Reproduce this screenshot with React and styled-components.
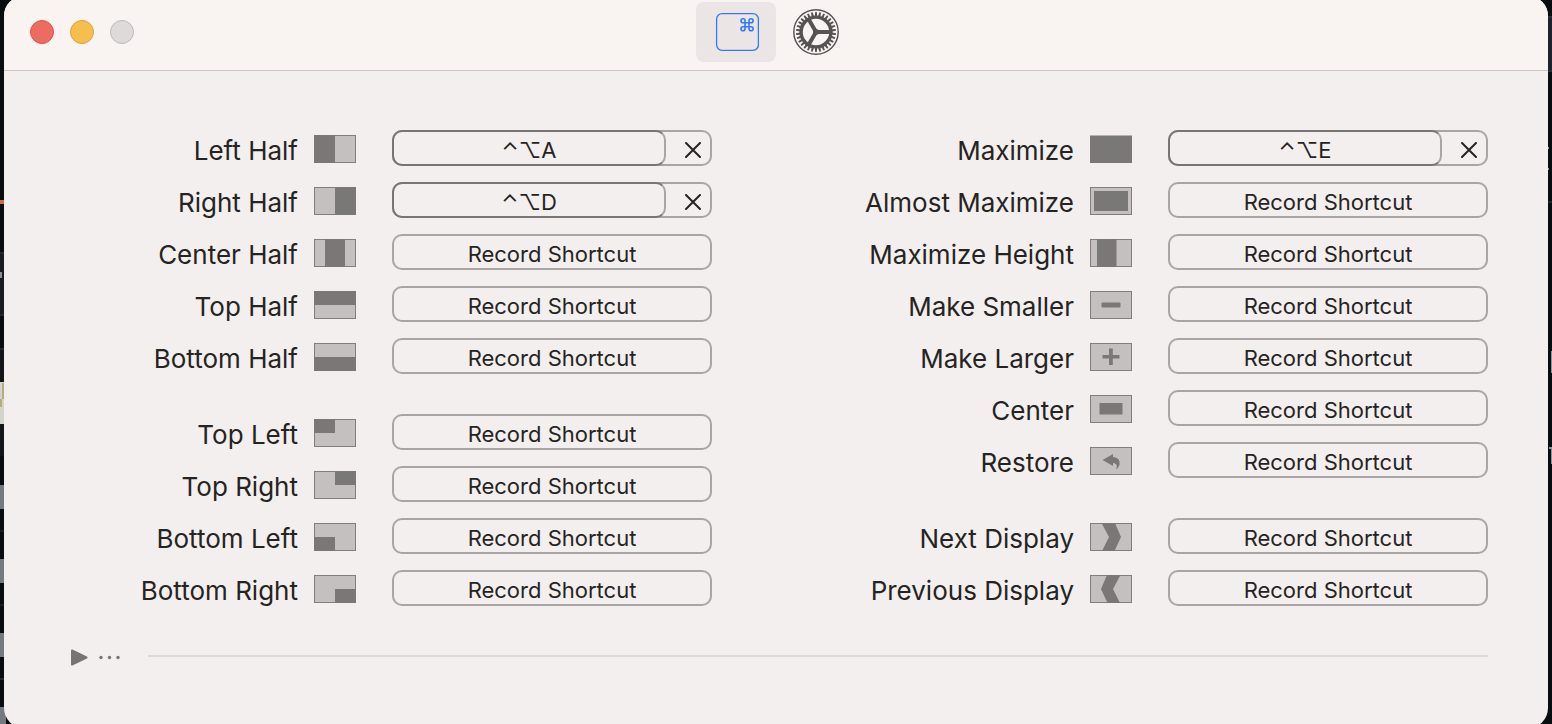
import React from "react";
import styled, { createGlobalStyle, css } from "styled-components";

const GlobalStyle = createGlobalStyle`
  * { box-sizing: border-box; }
  body { margin: 0; background: #0a0d10; }
  button { font: inherit; color: inherit; background: none; border: 0; padding: 0; margin: 0; }
`;

const bar = (color, y, h) => css`linear-gradient(${color}, ${color}) 0 ${y}px / 4px ${h}px no-repeat`;
const barRight = (color, y, h) => css`linear-gradient(${color}, ${color}) 100% ${y}px / 4px ${h}px no-repeat`;

const Desktop = styled.div`
  display: flex;
  min-height: 100vh;
  overflow: hidden;
  font-family: Inter, "Liberation Sans", sans-serif;
  color: #252423;
  background:
    ${bar("#c96a54", 200, 4)},
    ${bar("#26292c", 252, 2)},
    linear-gradient(#8b8f92, #8b8f92) 0 272px / 2px 6px no-repeat,
    ${bar("#26292c", 314, 2)},
    ${bar("#191c1f", 254, 60)},
    ${bar("#26292c", 348, 2)},
    linear-gradient(#b5ac80, #b5ac80) 2px 383px / 2px 16px no-repeat,
    linear-gradient(#b5ac80, #b5ac80) 0 399px / 2px 8px no-repeat,
    ${bar("#d5d3cd", 382, 42)},
    ${bar("#121518", 350, 106)},
    ${bar("#747a80", 485, 24)},
    ${bar("#1c1f22", 530, 2)},
    ${bar("#747a80", 559, 24)},
    ${bar("#1c1f22", 604, 2)},
    ${bar("#747a80", 633, 24)},
    ${bar("#26292c", 678, 2)},
    linear-gradient(#747a80, #747a80) 0 707px / 6px 17px no-repeat,
    ${barRight("#2b3038", 16, 2)},
    ${barRight("#1c222c", 18, 52)},
    ${barRight("#2b3038", 70, 2)},
    ${barRight("#20252b", 201, 2)},
    linear-gradient(#8e979e, #8e979e) calc(100% - 3px) 147px / 1px 2px no-repeat,
    linear-gradient(#8e979e, #8e979e) calc(100% - 3px) 168px / 1px 2px no-repeat,
    linear-gradient(#8e979e, #8e979e) 100% 351px / 1px 22px no-repeat,
    linear-gradient(#8e979e, #8e979e) 100% 447px / 3px 2px no-repeat,
    linear-gradient(#8e979e, #8e979e) 100% 449px / 1px 15px no-repeat,
    #0a0d10;
`;

const Window = styled.main`
  flex: 1;
  margin: -4px 4px;
  border-radius: 20px;
  overflow: hidden;
  background: #f3efee;
`;

const Toolbar = styled.header`
  display: grid;
  grid-template-columns: 1fr auto 1fr;
  align-items: center;
  height: 75px;
  padding: 4px 26px 6px;
  background: #f9f3f2;
  border-bottom: 1px solid #cbc6c5;
`;

const WindowControls = styled.div`
  display: flex;
  gap: 16px;
`;

const Light = styled.button`
  width: 24px;
  height: 24px;
  border-radius: 50%;
  background: ${(p) => p.$fill};
  border: 1px solid ${(p) => p.$edge};
`;

const Tabs = styled.nav`
  display: flex;
`;

const Tab = styled.button`
  display: grid;
  place-items: center;
  width: 80px;
  height: 60px;
  border-radius: 8px;
  background: ${(p) => (p.$active ? "#ebe6e5" : "transparent")};
`;

const Content = styled.div`
  padding: 59px 60px 60px 64px;
`;

const Columns = styled.div`
  display: grid;
  grid-template-columns: 1fr 1fr;
  gap: 132px;
`;

const Column = styled.section`
  display: flex;
  flex-direction: column;
  gap: 40px;
`;

const Group = styled.div`
  display: flex;
  flex-direction: column;
  gap: 16px;
`;

const Row = styled.div`
  display: grid;
  grid-template-columns: 1fr 42px 356px;
  align-items: start;
  height: 36px;
`;

const RowLabel = styled.label`
  padding-right: 16px;
  text-align: right;
  white-space: nowrap;
  font-size: 26px;
  line-height: 42px;
`;

const Glyph = styled.svg`
  display: block;
  margin-top: 5px;
`;

const field = css`
  height: 36px;
  border: 2px solid #a8a5a4;
  border-radius: 10px;
`;

const RecordButton = styled.button`
  ${field}
  margin-left: 36px;
  font-size: 22px;
  line-height: 36px;
`;

const Recorder = styled.div`
  ${field}
  display: flex;
  margin-left: 36px;
`;

const Recorded = styled.button`
  ${field}
  flex: 1;
  margin: -2px 0 -2px -2px;
  border-color: #777473 #a8a5a4 #777473 #777473;
  font-size: 22px;
  line-height: 36px;
`;

const Clear = styled.button`
  display: grid;
  place-items: center;
  width: 44px;
  padding: 4px 0 0 10px;
`;

const Footer = styled.footer`
  display: flex;
  align-items: center;
  gap: 26px;
  margin-top: 40px;
`;

const More = styled.button`
  display: flex;
  align-items: center;
  height: 20px;
  padding: 2px 0 0 2px;
`;

const Rule = styled.hr`
  flex: 1;
  height: 2px;
  margin: 0;
  border: 0;
  background: #dcd8d7;
`;

const DARK = "#797876";

const shapes = {
  leftHalf: <rect width="21" height="28" />,
  rightHalf: <rect x="21" width="21" height="28" />,
  centerHalf: <rect x="11" width="20" height="28" />,
  topHalf: <rect width="42" height="14" />,
  bottomHalf: <rect y="14" width="42" height="14" />,
  topLeft: <rect width="21" height="14" />,
  topRight: <rect x="21" width="21" height="14" />,
  bottomLeft: <rect y="14" width="21" height="14" />,
  bottomRight: <rect x="21" y="14" width="21" height="14" />,
  maximize: (
    <>
      <rect width="42" height="28" />
      <rect width="42" height="1" fill="#b5b2b1" />
    </>
  ),
  almost: <rect x="4" y="4" width="34" height="20" />,
  maxHeight: <rect x="7" width="19.5" height="28" />,
  smaller: <rect x="11.5" y="11.5" width="19" height="5" rx="1" />,
  larger: <path d="M12.5 12h6.500V5.500h3.800V12h6.700v3.600h-6.700V22H19v-6.400h-6.500z" />,
  center: <rect x="9.5" y="8" width="23" height="11.5" />,
  restore: (
    <path d="M12.500 13 23 7v3c4.600.3 7 3 6.600 6.800-.2 2.400-1.500 4.400-3.600 5.700 1.600-3.600 1-6-3-6.400v3z" />
  ),
  next: <path d="M11.500 0H25l6 14-6.500 14H12l7-14z" />,
  previous: <path d="M30.500 0H17l-6 14 6.500 14H30l-7-14z" />,
};

const PositionIcon = ({ shape }) => (
  <Glyph width="42" height="28" viewBox="0 0 42 28" aria-hidden="true">
    <rect width="42" height="28" fill="#c4c0bf" />
    <rect x=".5" y=".5" width="41" height="27" fill="none" stroke="#817e7d" />
    <g fill={DARK}>{shapes[shape]}</g>
  </Glyph>
);

const columns = [
  [
    [
      ["Left Half", "leftHalf", "A"],
      ["Right Half", "rightHalf", "D"],
      ["Center Half", "centerHalf"],
      ["Top Half", "topHalf"],
      ["Bottom Half", "bottomHalf"],
    ],
    [
      ["Top Left", "topLeft"],
      ["Top Right", "topRight"],
      ["Bottom Left", "bottomLeft"],
      ["Bottom Right", "bottomRight"],
    ],
  ],
  [
    [
      ["Maximize", "maximize", "E"],
      ["Almost Maximize", "almost"],
      ["Maximize Height", "maxHeight"],
      ["Make Smaller", "smaller"],
      ["Make Larger", "larger"],
      ["Center", "center"],
      ["Restore", "restore"],
    ],
    [
      ["Next Display", "next"],
      ["Previous Display", "previous"],
    ],
  ],
];

const ShortcutRow = ({ name, shape, keyName }) => (
  <Row>
    <RowLabel htmlFor={shape}>{name}</RowLabel>
    <PositionIcon shape={shape} />
    {keyName ? (
      <Recorder>
        <Recorded id={shape} type="button">{`⌃⌥${keyName}`}</Recorded>
        <Clear type="button" aria-label={`Clear ${name} shortcut`}>
          <svg width="16" height="16" viewBox="0 0 16 16" stroke="#252423" strokeWidth="2" strokeLinecap="round">
            <path d="M1 1l14 14M15 1 1 15" />
          </svg>
        </Clear>
      </Recorder>
    ) : (
      <RecordButton id={shape} type="button">Record Shortcut</RecordButton>
    )}
  </Row>
);

const KeyIcon = () => (
  <svg width="46" height="38" viewBox="0 0 46 38" fill="none" stroke="#3478f6" aria-hidden="true">
    <rect x="3.600" y=".7" width="41.800" height="36.600" rx="5.500" strokeWidth="1.300" />
    <path
      transform="translate(26 3.700) scale(.67)"
      strokeWidth="2.400"
      d="M15 6v12a3 3 0 1 0 3-3H6a3 3 0 1 0 3 3V6a3 3 0 1 0-3 3h12a3 3 0 1 0-3-3"
    />
  </svg>
);

const TEETH = Array.from({ length: 30 }, (_, i) => i * 12);

const GearIcon = () => (
  <svg width="46" height="46" viewBox="-23 -23 46 46" fill="none" stroke="#565352" aria-hidden="true">
    <circle r="22.200" strokeWidth="1.400" />
    <circle r="14.900" strokeWidth="3.400" />
    {TEETH.map((a) => (
      <path key={a} d="M16-1.200 20-.8V.8L16 1.200z" fill="#565352" stroke="none" transform={`rotate(${a + 6})`} />
    ))}
    {[0, 120, 240].map((a) => (
      <path key={a} d="M0 0H15" strokeWidth="4" transform={`rotate(${a})`} />
    ))}
    <circle r="3" fill="#565352" stroke="none" />
  </svg>
);

export default function App() {
  return (
    <Desktop>
      <GlobalStyle />
      <Window>
        <Toolbar>
          <WindowControls>
            <Light type="button" aria-label="Close" $fill="#ed6b5f" $edge="#d9574b" />
            <Light type="button" aria-label="Minimize" $fill="#f5bf50" $edge="#d9a33c" />
            <Light type="button" aria-label="Zoom" $fill="#dfdada" $edge="#bfbaba" />
          </WindowControls>
          <Tabs>
            <Tab type="button" aria-label="Shortcuts" $active><KeyIcon /></Tab>
            <Tab type="button" aria-label="Settings"><GearIcon /></Tab>
          </Tabs>
        </Toolbar>
        <Content>
          <Columns>
            {columns.map((groups, c) => (
              <Column key={c}>
                {groups.map((rows, g) => (
                  <Group key={g}>
                    {rows.map(([name, shape, keyName]) => (
                      <ShortcutRow key={shape} name={name} shape={shape} keyName={keyName} />
                    ))}
                  </Group>
                ))}
              </Column>
            ))}
          </Columns>
          <Footer>
            <More type="button" aria-label="Show more">
              <svg width="52" height="18" viewBox="0 0 52 18" fill="#777473" aria-hidden="true">
                <path d="M2 2.500 16.500 9.500 2 16.500z" stroke="#777473" strokeWidth="2" strokeLinejoin="round" />
                <circle cx="31" cy="9.500" r="1.700" />
                <circle cx="39.500" cy="9.500" r="1.700" />
                <circle cx="48" cy="9.500" r="1.700" />
              </svg>
            </More>
            <Rule />
          </Footer>
        </Content>
      </Window>
    </Desktop>
  );
}
